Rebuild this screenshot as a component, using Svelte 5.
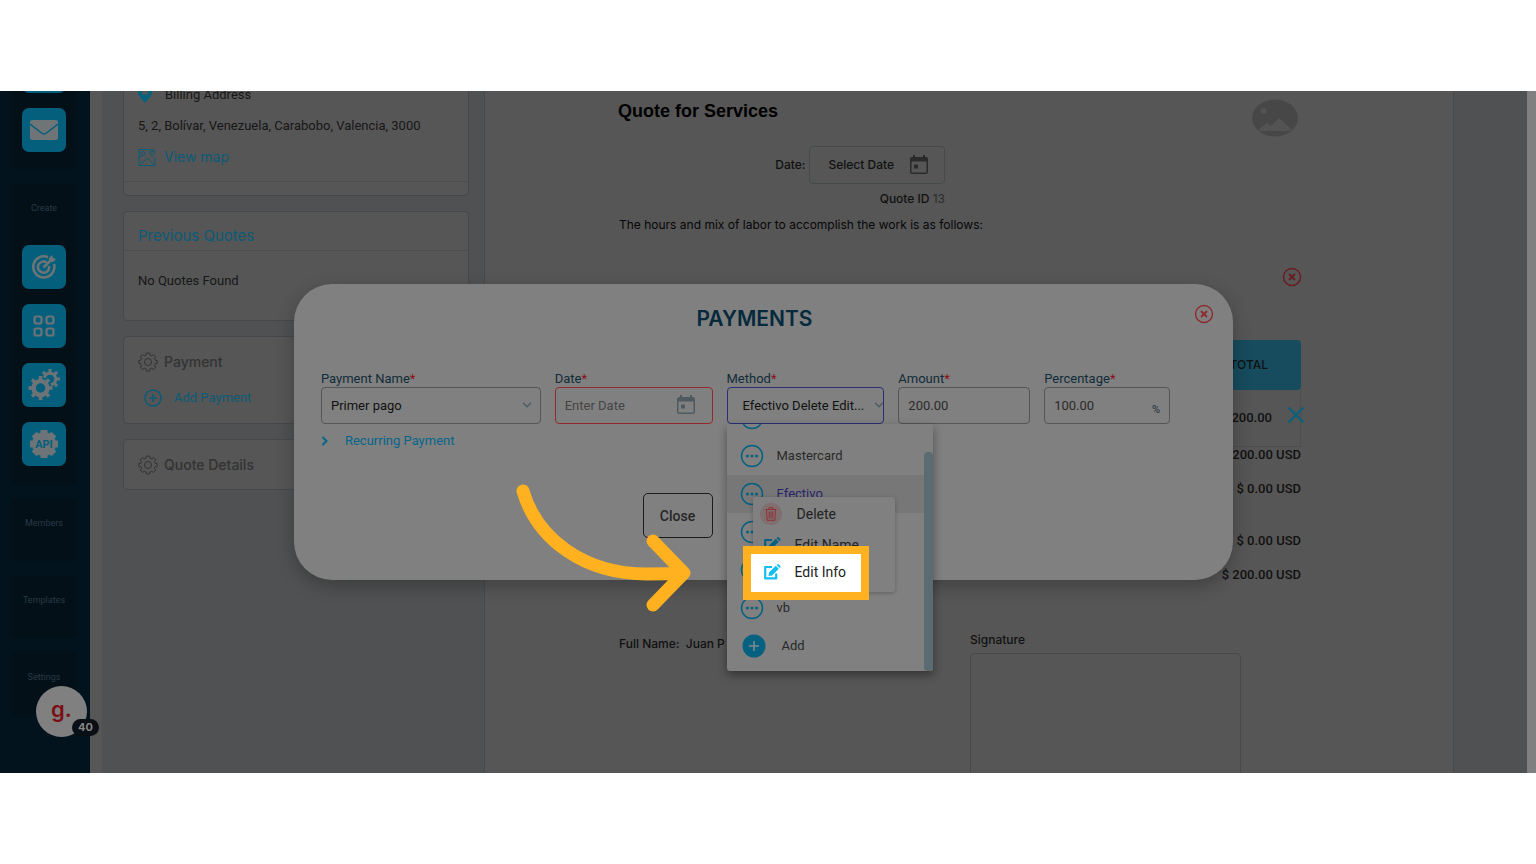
<script lang="ts">
	const methods = ['', 'Mastercard', 'Efectivo', '', '', 'vb'];
	const totals = ['$ 200.00 USD', '$ 0.00 USD', '$ 0.00 USD', '$ 200.00 USD'];
	const toothAngles = [0, 45, 90, 135, 180, 225, 270, 315];

	let paymentName = $state('Primer pago');
	let method = $state('Efectivo Delete Edit...');
	let date = $state('');
	let amount = $state('200.00');
	let percentage = $state('100.00');
</script>

{#snippet gear()}
	<svg class="gear" viewBox="0 0 20 20" width="20" height="20" fill="none" stroke="currentColor">
		<path
			d="M8.4 1h3.2l.5 2.2 1.4.6 2-1.2 2.2 2.2-1.3 1.9.6 1.4 2.2.5v2.8l-2.2.5-.6 1.4 1.3 1.9-2.2 2.2-2-1.2-1.4.6-.5 2.2H8.4l-.5-2.2-1.4-.6-2 1.2-2.2-2.2 1.3-1.9-.6-1.4L.8 11.400V8.600L3 8.100l.6-1.400-1.300-1.900 2.200-2.200 2 1.200 1.400-.6z"
		/>
		<circle cx="10" cy="10" r="3.500" />
	</svg>
{/snippet}

{#snippet calendar()}
	<svg class="calendar" viewBox="0 0 18 20" width="18" height="20">
		<path
			fill="currentColor"
			d="M3 0h2v2h8V0h2v2h1a2 2 0 0 1 2 2v13a2 2 0 0 1-2 2H2a2 2 0 0 1-2-2V4a2 2 0 0 1 2-2h1zM1.500 6.500v11h15v-11zm2.500 3h4v4H4z"
			fill-rule="evenodd"
		/>
	</svg>
{/snippet}

{#snippet closeCircle()}
	<svg viewBox="0 0 20 20" width="20" height="20" fill="none" stroke="currentColor">
		<circle cx="10" cy="10" r="8.500" stroke-width="1.400" />
		<path d="M7 7l6 6M13 7l-6 6" stroke-width="1.800" />
	</svg>
{/snippet}

{#snippet edit()}
	<svg class="edit" viewBox="0 0 18 16" width="18" height="16">
		<path
			fill="none"
			stroke="currentColor"
			stroke-width="2.200"
			stroke-linejoin="round"
			d="M9 3H2.200v11.400h11V9.500"
		/>
		<path fill="currentColor" d="M6 8.500 12.800 1.700l3 3L9 11.500l-3.500.5zM13.600.9l.7-.6q.8-.5 1.500.1l1.500 1.500q.6.8 0 1.500l-.7.6z" />
	</svg>
{/snippet}

{#snippet chevron()}
	<svg class="chevron" viewBox="0 0 10 6" width="10" height="6" fill="none" stroke="currentColor">
		<path d="M1 .8l4 4 4-4" stroke-width="1.400" />
	</svg>
{/snippet}

<div class="page">
	<div class="screen">
		<nav class="sidebar">
			<div class="group first">
				<a class="tile" href="#inbox" aria-label="Inbox"></a>
				<a class="tile" href="#mail" aria-label="Mail">
					<svg viewBox="0 0 28 20" width="28" height="20">
						<rect width="28" height="20" rx="2" fill="#6f7577" />
						<path d="M0 4l11.500 9q2.500 1.800 5 0L28 4" fill="none" stroke="#045f7c" stroke-width="1.500" />
					</svg>
				</a>
			</div>
			<div class="group create">
				<span>Create</span>
				<a class="tile" href="#goals" aria-label="Goals">
					<svg viewBox="0 0 26 26" width="26" height="26" fill="none" stroke="#6d7477" stroke-width="2.600">
						<path d="M17 3.200A10.600 10.600 0 1 0 23 10M15.500 8.400A5.600 5.600 0 1 0 18 12" />
						<path d="M12.500 13.500 20 6" />
						<path d="M18 7.500V4l3-3 1 3 3 1-3 3z" fill="#6d7477" stroke="none" />
					</svg>
				</a>
				<a class="tile" href="#apps" aria-label="Apps">
					<svg viewBox="0 0 22 22" width="22" height="22" fill="none" stroke="#6d7477" stroke-width="2.200">
						<rect x="1.500" y="1.500" width="7" height="7" rx="2" />
						<rect x="13.500" y="1.500" width="7" height="7" rx="2" />
						<rect x="1.500" y="13.500" width="7" height="7" rx="2" />
						<rect x="13.500" y="13.500" width="7" height="7" rx="2" />
					</svg>
				</a>
				<a class="tile" href="#automation" aria-label="Automation">
					<svg viewBox="0 0 34 34" width="34" height="34">
						<g fill="none" stroke="#6d7477">
							<circle cx="23" cy="11" r="5.800" stroke-width="3" />
							{#each toothAngles as angle}
								<path d="M23 4.500V1" stroke-width="3" transform="rotate({angle} 23 11)" />
							{/each}
							<circle cx="13.500" cy="20" r="10" fill="#045f7c" stroke="#045f7c" stroke-width="2" />
							<circle cx="13.500" cy="20" r="7" stroke-width="4.500" />
							{#each toothAngles as angle}
								<path d="M13.500 11.500V8" stroke-width="3.600" transform="rotate({angle} 13.5 20)" />
							{/each}
						</g>
					</svg>
				</a>
				<a class="tile" href="#api" aria-label="API">
					<svg viewBox="0 0 30 30" width="30" height="30">
						<circle cx="15" cy="15" r="12" fill="#6d7477" />
						<g stroke="#6d7477" stroke-width="7">
							{#each toothAngles as angle}
								<path d="M15 4V1" transform="rotate({angle} 15 15)" />
							{/each}
						</g>
						<text x="15" y="19" text-anchor="middle" font-size="11" font-weight="700" fill="#045f7c">API</text>
					</svg>
				</a>
			</div>
			<div class="group"><span>Members</span></div>
			<div class="group"><span>Templates</span></div>
			<div class="group"><span>Settings</span></div>
		</nav>

		<div class="column">
			<section class="card address">
				<div class="line">
					<svg viewBox="0 0 14 20" width="14" height="20">
						<path d="M7 0a7 7 0 0 1 7 7c0 4-4 7-7 11C4 14 0 11 0 7a7 7 0 0 1 7-7zm0 4a3 3 0 1 0 0 6 3 3 0 0 0 0-6z" fill="#04627f" />
					</svg>
					<span class="billing">Billing Address</span>
				</div>
				<p>5, 2, Bolívar, Venezuela, Carabobo, Valencia, 3000</p>
				<a class="line map" href="#map">
					<svg viewBox="0 0 18 18" width="18" height="18" fill="none" stroke="currentColor">
						<path d="M11 1.500H1v16h16V9M1.500 17l8-7 7 7M1 9.500l4-2.500" />
						<path d="M14 8.500c-1.500-2-2.600-3.200-2.600-4.800a2.600 2.600 0 0 1 5.200 0c0 1.600-1.100 2.800-2.600 4.800z" />
						<circle cx="14" cy="3.600" r=".8" />
						<circle cx="5" cy="5.500" r="2" />
					</svg>
					View map
				</a>
				<hr />
			</section>

			<section class="card previous">
				<h2>Previous Quotes</h2>
				<hr />
				<p>No Quotes Found</p>
			</section>

			<section class="card payment">
				<h3>{@render gear()}Payment</h3>
				<button class="add-payment">
					<svg viewBox="0 0 18 18" width="18" height="18" fill="none" stroke="currentColor" stroke-width="1.500">
						<circle cx="9" cy="9" r="8" />
						<path d="M9 5v8M5 9h8" />
					</svg>
					Add Payment
				</button>
			</section>

			<section class="card details">
				<h3>{@render gear()}Quote Details</h3>
			</section>
		</div>

		<main class="document">
			<header>
				<h1>Quote for Services</h1>
				<svg class="logo" viewBox="0 0 46 38" width="46" height="38">
					<ellipse cx="23" cy="19" rx="23" ry="18.500" fill="#474747" />
					<circle cx="11.500" cy="12" r="3" fill="#535353" />
					<path d="M6 31l9-7 4 3 8-8 13 12-3 1H9z" fill="#535353" />
				</svg>
			</header>
			<div class="meta">
				<div class="date-row">
					<span>Date:</span>
					<button class="select-date">Select Date {@render calendar()}</button>
				</div>
				<div class="quote-id">Quote ID <span>13</span></div>
			</div>
			<p class="intro">The hours and mix of labor to accomplish the work is as follows:</p>
			<button class="remove-table" aria-label="Remove table">{@render closeCircle()}</button>
			<table>
				<thead>
					<tr><th>TOTAL</th></tr>
				</thead>
				<tbody>
					<tr>
						<td>
							$ 200.00
							<button class="remove-row" aria-label="Remove row">
								<svg viewBox="0 0 18 18" width="18" height="18" fill="none" stroke="currentColor" stroke-width="2">
									<path d="M1.500 1.500l15 15M16.500 1.500l-15 15" />
								</svg>
							</button>
						</td>
					</tr>
				</tbody>
			</table>
			<ul class="totals">
				{#each totals as total}
					<li>{total}</li>
				{/each}
			</ul>
			<div class="sign">
				<p>Full Name: &nbsp;Juan P</p>
				<div class="signature">
					<span>Signature</span>
					<div class="pad"></div>
				</div>
			</div>
		</main>
		<div class="scrollbar"></div>

		<div class="help">
			<span class="help-logo">g.</span>
			<span class="count">40</span>
		</div>

		<div class="overlay">
			<form class="modal" onsubmit={(e) => e.preventDefault()}>
				<header>
					<h2>PAYMENTS</h2>
					<button type="button" aria-label="Close dialog">{@render closeCircle()}</button>
				</header>
				<div class="fields">
					<div class="field">
						<label for="name">Payment Name<b>*</b></label>
						<select id="name" class="strong" bind:value={paymentName}>
							<option>Primer pago</option>
						</select>
						{@render chevron()}
					</div>
					<div class="field invalid">
						<label for="date">Date<b>*</b></label>
						<input id="date" placeholder="Enter Date" bind:value={date} />
						{@render calendar()}
					</div>
					<div class="field active">
						<label for="method">Method<b>*</b></label>
						<select id="method" class="strong" bind:value={method}>
							<option>Efectivo Delete Edit...</option>
						</select>
						{@render chevron()}

						<div class="dropdown">
							<ul>
								{#each methods as name}
									<li class:selected={name === 'Efectivo'}>
										<svg viewBox="0 0 24 24" width="24" height="24" fill="currentColor">
											<circle cx="12" cy="12" r="10.500" fill="none" stroke="currentColor" stroke-width="1.500" />
											<circle cx="7.500" cy="12" r="1.500" />
											<circle cx="12" cy="12" r="1.500" />
											<circle cx="16.500" cy="12" r="1.500" />
										</svg>
										<span>{name}</span>
									</li>
								{/each}
								<li class="add">
									<svg viewBox="0 0 24 24" width="24" height="24">
										<circle cx="12" cy="12" r="11.500" fill="currentColor" />
										<path d="M12 7v10M7 12h10" stroke="#7d8a90" stroke-width="1.600" />
									</svg>
									<span>Add</span>
								</li>
							</ul>
							<div class="thumb"></div>

							<div class="menu">
								<button type="button" class="delete">
									<i>
										<svg viewBox="0 0 12 14" width="12" height="14" fill="none" stroke="currentColor">
											<path d="M.5 2.500h11M4 2.500V.7h4v1.800M1.500 2.500l.6 10.800h7.800l.6-10.800M4.200 4.500v7M6 4.500v7M7.800 4.500v7" />
										</svg>
									</i>
									Delete
								</button>
								<button type="button" class="name">{@render edit()}Edit Name</button>
								<button type="button" class="info">{@render edit()}Edit Info</button>
							</div>
						</div>
					</div>
					<div class="field">
						<label for="amount">Amount<b>*</b></label>
						<input id="amount" bind:value={amount} />
					</div>
					<div class="field">
						<label for="percentage">Percentage<b>*</b></label>
						<input id="percentage" bind:value={percentage} />
						<span class="percent">%</span>
					</div>
				</div>
				<a class="recurring" href="#recurring">
					<svg viewBox="0 0 8 10" width="8" height="10" fill="none" stroke="currentColor" stroke-width="2">
						<path d="M1.500 1l4 4-4 4" />
					</svg>
					Recurring Payment
				</a>
				<div class="actions">
					<button type="button" class="close">Close</button>
				</div>

				<svg class="arrow" viewBox="0 0 180 130" width="180" height="130">
					<path
						d="M7 7C21 55 68 90 131 90q20 0 37-1M137 57l31 32-31 32"
						fill="none"
						stroke="#ffb11f"
						stroke-width="13"
						stroke-linecap="round"
						stroke-linejoin="round"
					/>
				</svg>
			</form>
		</div>
	</div>
</div>

<style>
	:global(body) {
		background: #fff;
	}

	.page {
		box-sizing: border-box;
		min-height: 100vh;
		padding: 91px 0;
		font: 13px/20px Roboto, 'Liberation Sans', sans-serif;
		color: #171717;
	}

	.screen {
		position: relative;
		display: flex;
		height: calc(100vh - 182px);
		overflow: hidden;
		background: #505152;
	}

	h1, h2, h3, p, ul {
		margin: 0;
		padding: 0;
		list-style: none;
	}

	button, input, select {
		box-sizing: border-box;
		margin: 0;
		padding: 0;
		border: 0;
		background: none;
		font: inherit;
		color: inherit;
		appearance: none;
	}

	svg {
		display: block;
		flex-shrink: 0;
	}

	a {
		color: #0b5b77;
		text-decoration: none;
	}

	hr {
		margin: 0;
		border: 0;
		border-top: 1px solid #4b4d4f;
	}

	/* sidebar */
	.sidebar {
		display: flex;
		flex-direction: column;
		gap: 15px;
		box-sizing: border-box;
		width: 90px;
		padding: 0 14px 0 12px;
		background: #02131e;
		flex-shrink: 0;
	}

	.group {
		display: flex;
		flex-direction: column;
		align-items: center;
		gap: 15px;
		box-sizing: border-box;
		min-height: 62px;
		padding: 18px 0;
		background: #031018;
		flex-shrink: 0;
	}

	.group.first {
		margin-top: -42px;
		padding: 0 0 17px;
	}

	.group span {
		font-size: 9px;
		line-height: 12px;
		color: #293a44;
	}

	.create span {
		margin-bottom: 16px;
	}

	.tile {
		display: flex;
		align-items: center;
		justify-content: center;
		width: 44px;
		height: 44px;
		border-radius: 7px;
		background: #045f7c;
	}

	/* left column */
	.column {
		display: flex;
		flex-direction: column;
		gap: 15px;
		box-sizing: border-box;
		width: 394px;
		padding: 0 15px 0 21px;
		border-left: 12px solid #565656;
		flex-shrink: 0;
	}

	.card {
		box-sizing: border-box;
		border: 1px solid #45494d;
		border-radius: 4px;
		background: #565656;
	}

	.card h2,
	.map {
		font: 15px/20px Inter, sans-serif;
		color: #0b5b77;
	}

	.card h3 {
		display: flex;
		align-items: center;
		gap: 6px;
		font: 500 14px/20px Inter, sans-serif;
		color: #333;
	}

	.card p {
		padding: 0 14px;
	}

	.line {
		display: flex;
		align-items: center;
		gap: 8px;
		padding: 0 14px;
	}

	.billing {
		padding-left: 5px;
	}

	.address {
		display: flex;
		flex-direction: column;
		gap: 11px;
		margin-top: -7px;
		padding-bottom: 13px;
	}

	.map {
		font-size: 14px;
	}

	.address hr {
		margin-top: 3px;
	}

	.previous {
		padding: 14px 0 29px;
	}

	.previous h2 {
		padding: 0 14px 4px;
	}

	.previous p {
		padding-top: 20px;
	}

	.payment {
		padding: 15px 14px;
	}

	.add-payment {
		display: flex;
		align-items: center;
		gap: 12px;
		margin-top: 16px;
		padding-left: 6px;
		color: #0b5b77;
	}

	.details {
		padding: 15px 14px 14px;
	}

	/* quote document */
	.document {
		flex: 1;
		margin-right: 73px;
		padding: 0 152px 0 133px;
		border: 0 solid #474a4c;
		border-width: 0 1px;
		background: #565656;
		font: 500 12px/20px Inter, 'Liberation Sans', sans-serif;
		color: #111;
	}

	.document header {
		display: flex;
		justify-content: space-between;
		padding: 8px 3px 0 0;
	}

	h1 {
		font: 700 18px/24px 'Liberation Sans', Arial, sans-serif;
		color: #000;
	}

	.meta {
		display: flex;
		flex-direction: column;
		align-items: flex-end;
		width: 327px;
		padding-top: 9px;
	}

	.date-row {
		display: flex;
		align-items: center;
		gap: 4px;
	}

	.select-date {
		display: flex;
		align-items: center;
		gap: 16px;
		height: 38px;
		padding: 0 16px 0 18px;
		border: 1px solid #454a4c;
		border-radius: 4px;
	}

	.select-date .calendar {
		color: #2a2a2a;
	}

	.quote-id {
		padding-top: 5px;
	}

	.quote-id span {
		font-weight: 400;
		color: #2c2c2c;
	}

	.intro {
		padding: 6px 0 0 1px;
		font-weight: 400;
		color: #060606;
	}

	.remove-table {
		display: block;
		margin: 32px -1px 0 auto;
		color: #6b1a20;
	}

	table {
		width: 100%;
		margin-top: 53px;
		border-spacing: 0;
		text-align: right;
	}

	th {
		height: 50px;
		padding: 0 33px 0 0;
		border-radius: 4px;
		background: #164c5d;
		font-weight: 500;
		text-align: right;
	}

	td {
		position: relative;
		height: 56px;
		padding: 0 28px 0 0;
		border: 0 solid #4c4f51;
		border-width: 0 1px 1px 0;
		font: 500 13px/20px Roboto, sans-serif;
	}

	.remove-row {
		position: absolute;
		top: 16px;
		right: -5px;
		color: #04627f;
	}

	.totals {
		display: flex;
		flex-direction: column;
		gap: 14px;
		margin-top: -2px;
		font: 500 13px/20px Roboto, sans-serif;
		text-align: right;
	}

	.totals li:nth-child(3) {
		padding-top: 18px;
	}

	.sign {
		display: flex;
		justify-content: space-between;
		padding: 45px 60px 0 1px;
	}

	.sign p {
		padding-top: 4px;
	}

	.signature {
		width: 271px;
	}

	.signature span {
		display: block;
	}

	.pad {
		height: 160px;
		margin-top: 3px;
		border: 1px solid #464a4b;
		border-radius: 4px;
	}

	.scrollbar {
		width: 9px;
		background: #808080;
	}

	.help {
		position: absolute;
		bottom: 36px;
		left: 36px;
	}

	.help-logo {
		display: block;
		width: 51px;
		height: 51px;
		border-radius: 50%;
		background: #808080;
		font: 600 22px/46px Inter, sans-serif;
		color: #7c0f16;
		text-align: center;
	}

	.count {
		position: absolute;
		right: -12px;
		bottom: 1px;
		width: 27px;
		border-radius: 9px;
		background: #0a0e15;
		font: 700 11px/17px Inter, sans-serif;
		color: #858585;
		text-align: center;
	}

	/* payments modal */
	.overlay {
		position: absolute;
		inset: 0 9px 0 0;
		display: flex;
		align-items: center;
		justify-content: center;
	}

	.modal {
		position: relative;
		box-sizing: border-box;
		width: 61.5%;
		padding: 20px 0 42px;
		border-radius: 38px;
		background: #808080;
		box-shadow: 0 6px 18px rgba(0, 0, 0, 0.25);
	}

	.modal header {
		display: flex;
		align-items: flex-start;
		padding: 0 19px 0 21px;
		color: #8d2b2f;
	}

	.modal h2 {
		flex: 1;
		font: 600 21px/30px Inter, sans-serif;
		color: #06293c;
		text-align: center;
	}

	.fields,
	.actions {
		display: grid;
		grid-template-columns: 220fr 158fr 158fr 132fr 126fr;
		gap: 14px;
		margin: 37px 63px 0 27px;
	}

	.field {
		position: relative;
		min-width: 0;
	}

	label {
		display: block;
		line-height: 16px;
		color: #102c39;
	}

	label b {
		font-weight: 400;
		color: #8b1018;
	}

	.field input,
	.field select {
		display: block;
		width: 100%;
		height: 37px;
		padding: 0 9px;
		border: 1px solid #555;
		border-radius: 4px;
		color: #2a2a2a;
	}

	.field .strong {
		color: #111;
	}

	.field.invalid input {
		border-color: #922b2b;
	}

	.invalid input::placeholder {
		color: #444;
		opacity: 1;
	}

	.field.active select {
		padding: 0 0 0 15px;
		border-color: #2b2e72;
	}

	.field > :global(.chevron),
	.field > :global(.calendar) {
		position: absolute;
		top: 31px;
		right: 9px;
		color: #4e5a60;
		pointer-events: none;
	}

	.active > :global(.chevron) {
		right: 0;
	}

	.field > :global(.calendar) {
		top: 24px;
		right: 18px;
	}

	.percent {
		position: absolute;
		right: 10px;
		bottom: 4px;
		font-size: 11px;
		color: #1c2e36;
	}

	.recurring {
		display: flex;
		align-items: center;
		gap: 16px;
		margin: 7px 27px 0;
		color: #07658a;
	}

	.actions {
		margin-top: 42px;
	}

	.close {
		grid-column: 2;
		justify-self: end;
		width: 70px;
		height: 45px;
		border: 1px solid #1c1c1c;
		border-radius: 5px;
		font-size: 14px;
		font-weight: 500;
		color: #262626;
	}

	.dropdown {
		position: absolute;
		z-index: 2;
		top: 53px;
		left: 0;
		width: 206px;
		background: #808080;
		border-radius: 0 0 3px 3px;
		box-shadow: 0 4px 10px rgba(0, 0, 0, 0.4);
	}

	.dropdown ul {
		overflow: hidden;
		padding-bottom: 6px;
	}

	.dropdown li {
		display: flex;
		align-items: center;
		gap: 13px;
		height: 38px;
		padding-left: 13px;
		color: #066080;
	}

	.dropdown li:first-child {
		margin-top: -25px;
	}

	.dropdown li span {
		color: #292929;
	}

	.dropdown li.selected {
		background: #777;
	}

	.dropdown li.selected span {
		color: #28246b;
	}

	.dropdown li.add {
		gap: 16px;
		padding-left: 15px;
	}

	.thumb {
		position: absolute;
		top: 28px;
		right: 0;
		bottom: 0;
		width: 9px;
		border-radius: 4px;
		background: #5b6b72;
	}

	.menu {
		position: absolute;
		top: 73px;
		left: 26px;
		display: flex;
		flex-direction: column;
		width: 142px;
		background: #808080;
		border-radius: 3px;
		box-shadow: 0 1px 4px rgba(0, 0, 0, 0.25);
		font-size: 14px;
		color: #222;
	}

	.menu button {
		display: flex;
		align-items: center;
		gap: 14px;
		padding-left: 10px;
	}

	.menu .delete {
		gap: 15px;
		height: 34px;
		padding-left: 7px;
	}

	.delete i {
		display: flex;
		align-items: center;
		justify-content: center;
		width: 22px;
		height: 22px;
		border-radius: 50%;
		background: #816e6e;
		color: #8c3236;
	}

	.menu .name {
		height: 23px;
		padding-top: 4px;
	}

	.menu .info {
		width: 110px;
		height: 38px;
		margin-left: -2px;
		padding: 0 0 3px 12px;
		background: #fff;
		outline: 8px solid #ffb11f;
	}

	.name :global(.edit) {
		color: #066080;
	}

	.info :global(.edit) {
		color: #12bdf8;
	}

	.arrow {
		position: absolute;
		top: 200px;
		left: 222px;
		pointer-events: none;
	}
</style>
